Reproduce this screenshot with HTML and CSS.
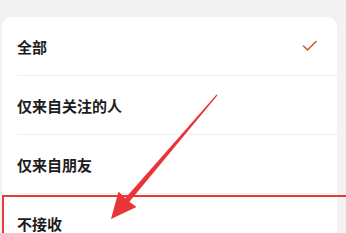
FILE: index.html
```html
<!DOCTYPE html>
<html lang="zh">
<head>
  <meta charset="UTF-8" />
  <meta name="viewport" content="width=device-width, initial-scale=1.0" />
  <title>消息设置</title>
  <link rel="stylesheet" href="styles.css">
</head>
<body>
  <div class="card">
    <div class="row">
      <span>全部</span>
      <svg class="check" width="18" height="14" viewBox="0 0 18 14">
        <path d="M2.5 7 L6.5 11 L15 2.5" fill="none" stroke="#d45a32" stroke-width="1.6" stroke-linecap="round" stroke-linejoin="round"/>
      </svg>
    </div>
    <div class="row"><span>仅来自关注的人</span></div>
    <div class="row"><span>仅来自朋友</span></div>
    <div class="row"><span>不接收</span></div>
  </div>

  <div class="highlight"></div>
  <svg class="arrow" width="346" height="233" viewBox="0 0 346 233">
    <polygon fill="#e8353a" points="216.6,94.5 125.2,198.2 118.5,191.5 111,219 136.5,207 129.4,201.8 217.5,95.3"/>
  </svg>
</body>
</html>
```

FILE: styles.css
```css
html, body {
  overflow: hidden;
}
body {
  margin: 0;
  background: #f2f2f2;
  font-family: "Noto Sans CJK SC", "Noto Sans", sans-serif;
  height: 233px;
  position: relative;
}
.card {
  margin: 17px 0 0 2px;
  width: 335px;
  height: 216px;
  overflow: hidden;
  background: #fff;
  border-radius: 10px 10px 0 0;
}
.row {
  height: 58px;
  display: flex;
  align-items: center;
  justify-content: space-between;
  margin-left: 15px;
  padding-right: 18px;
  border-bottom: 1px solid #eeeeee;
  font-size: 15px;
  font-weight: 700;
  color: #1c1c1c;
}
.row:last-child {
  border-bottom: none;
}
.check {
  display: block;
  margin-top: -1px;
}
.highlight {
  position: absolute;
  left: 2px;
  right: 0;
  top: 195px;
  bottom: 0;
  border: 2px solid #e53a3d;
  border-right: none;
  border-bottom: none;
}
.arrow {
  position: absolute;
  left: 0;
  top: 0;
}
```
